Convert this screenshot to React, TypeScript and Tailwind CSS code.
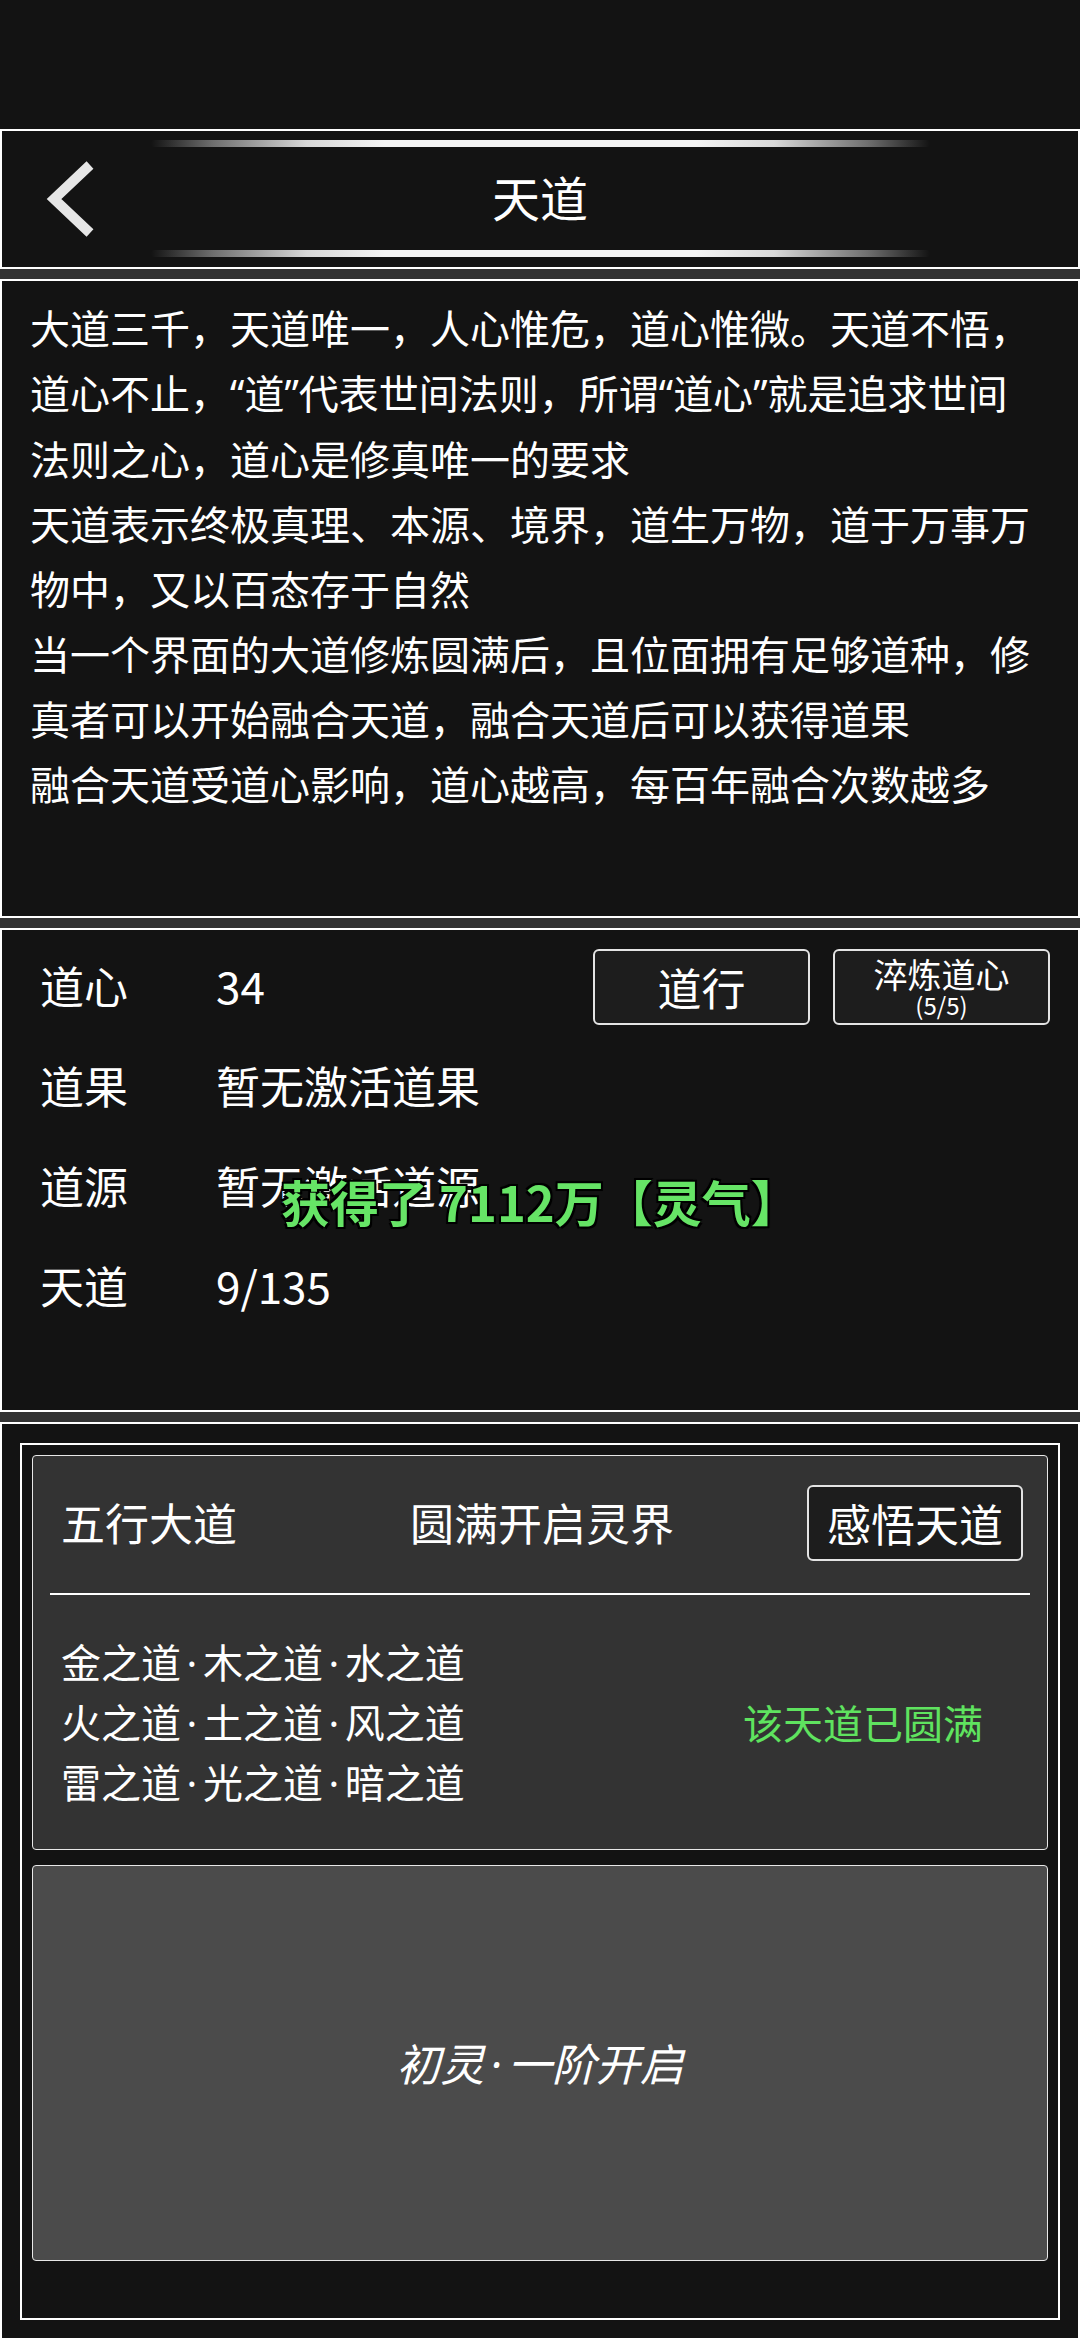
import React from 'react';

const introLines = [
    '大道三千，天道唯一，人心惟危，道心惟微。天道不悟，',
    '道心不止，“道”代表世间法则，所谓“道心”就是追求世间',
    '法则之心，道心是修真唯一的要求',
    '天道表示终极真理、本源、境界，道生万物，道于万事万',
    '物中，又以百态存于自然',
    '当一个界面的大道修炼圆满后，且位面拥有足够道种，修',
    '真者可以开始融合天道，融合天道后可以获得道果',
    '融合天道受道心影响，道心越高，每百年融合次数越多',
];

const stats = [
    { label: '道果', value: '暂无激活道果' },
    { label: '道源', value: '暂无激活道源' },
    { label: '天道', value: '9/135' },
];

const daoRows = ['金之道·木之道·水之道', '火之道·土之道·风之道', '雷之道·光之道·暗之道'];

// quotes and middle dots are narrow in the game font, so set them in a latin face
function Narrow({ text }: { text: string }) {
    const parts = text.split(/([“”·])/);
    return (
        <>
            {parts.map((p, i) => {
                if (p === '·') {
                    return (
                        <span key={i} className="px-[0.14em] font-['Noto_Sans',sans-serif]">
                            {p}
                        </span>
                    );
                }
                if (p === '“' || p === '”') {
                    return (
                        <span key={i} className="font-['Noto_Sans',sans-serif]">
                            {p}
                        </span>
                    );
                }
                return <React.Fragment key={i}>{p}</React.Fragment>;
            })}
        </>
    );
}

function GlowLine() {
    return (
        <div className="h-[7px] w-[779px] shrink-0 rounded-full bg-[linear-gradient(90deg,rgba(120,120,120,0)_0%,rgba(150,150,150,0.7)_8%,#d8d8d8_20%,#f4f4f4_30%,#f4f4f4_70%,#d8d8d8_80%,rgba(150,150,150,0.7)_92%,rgba(120,120,120,0)_100%)]" />
    );
}

export default function App() {
    return (
        <div className="flex h-[2340px] w-[1080px] flex-col overflow-hidden bg-[#333333] font-['Noto_Sans_CJK_SC','Noto_Sans',sans-serif] text-white">
            <div className="h-[129px] shrink-0 bg-[#131313]" />

            {/* header */}
            <header className="flex h-[140px] shrink-0 flex-col items-center border-2 border-white bg-[#131313]">
                <div className="mt-[9px]" />
                <GlowLine />
                <div className="grid w-full flex-1 grid-cols-[1fr_auto_1fr] items-center">
                    <div className="pl-[38px]">
                        <svg width="56" height="84" viewBox="0 0 56 84" fill="none">
                            <polyline
                                points="50,8 14,42 50,76"
                                stroke="#e6e6e6"
                                strokeWidth="10"
                                strokeLinecap="butt"
                                strokeLinejoin="miter"
                            />
                        </svg>
                    </div>
                    <h1 className="-mt-[6px] text-[48px] leading-none font-normal">天道</h1>
                    <div />
                </div>
                <GlowLine />
                <div className="mb-[10px]" />
            </header>

            {/* intro text */}
            <section className="mt-[10px] h-[639px] shrink-0 border-2 border-white bg-[#131313] px-[28px] pt-[14px] text-[40px] leading-[65px]">
                {introLines.map((line) => (
                    <div key={line} className="whitespace-nowrap">
                        <Narrow text={line} />
                    </div>
                ))}
            </section>

            {/* stats */}
            <section className="relative mt-[10px] h-[484px] shrink-0 border-2 border-white bg-[#131313] pt-[5px] text-[44px]">
                <div className="flex h-[100px] items-center pl-[38px] pr-[28px]">
                    <span className="w-[176px] leading-none">道心</span>
                    <span className="leading-none">34</span>
                    <div className="ml-auto mt-[3px] flex gap-[23px]">
                        <button className="flex h-[76px] w-[217px] items-center justify-center rounded-[6px] border-2 border-[#e4e4e4] bg-[#1d1d1d] text-[44px] leading-none text-white">
                            道行
                        </button>
                        <button className="flex h-[76px] w-[217px] flex-col items-center justify-center rounded-[6px] border-2 border-[#e4e4e4] bg-[#1d1d1d] text-white">
                            <span className="text-[34px] leading-[36px]">淬炼道心</span>
                            <span className="text-[24px] leading-[26px]">(5/5)</span>
                        </button>
                    </div>
                </div>
                {stats.map((s) => (
                    <div key={s.label} className="flex h-[100px] items-center pl-[38px] pr-[28px]">
                        <span className="w-[176px] leading-none">{s.label}</span>
                        <span className="leading-none">{s.value}</span>
                    </div>
                ))}

                {/* toast */}
                <div className="absolute left-[279px] top-[246px] whitespace-nowrap text-[49px] font-bold leading-none text-[#66e466] [text-shadow:2px_2px_0_#000,-2px_2px_0_#000,2px_-2px_0_#000,-2px_-2px_0_#000,0_0_3px_#000]">
                    获得了 7112万【灵气】
                </div>
            </section>

            {/* realm */}
            <section className="mt-[10px] flex-1 border-2 border-white bg-[#131313] px-[18px] pt-[19px]">
                <div className="border-2 border-white p-[10px] pb-[57px]">
                    <div className="h-[395px] rounded-[4px] border border-[#e8e8e8] bg-[#333333] pt-[29px]">
                        <div className="grid grid-cols-3 items-center pl-[28px] pr-[24px] text-[44px]">
                            <span className="-mt-[3px] leading-none">五行大道</span>
                            <span className="-mt-[3px] text-center leading-none">圆满开启灵界</span>
                            <button className="flex h-[76px] w-[216px] items-center justify-center justify-self-end rounded-[6px] border-2 border-[#e4e4e4] bg-[#1d1d1d] text-[44px] leading-none text-white">
                                感悟天道
                            </button>
                        </div>
                        <div className="mx-[17px] mt-[32px] h-[2px] bg-white" />
                        <div className="mt-[37px] flex items-center justify-between pl-[28px] pr-[64px] text-[40px]">
                            <div className="leading-[59px]">
                                {daoRows.map((r) => (
                                    <div key={r} className="whitespace-nowrap">
                                        <Narrow text={r} />
                                    </div>
                                ))}
                            </div>
                            <span className="leading-none text-[#5fe35f]">该天道已圆满</span>
                        </div>
                    </div>
                    <div className="mt-[15px] flex h-[396px] items-center justify-center rounded-[4px] border border-[#e8e8e8] bg-[#4b4b4b]">
                        <span className="text-[44px] italic leading-none">
                            <Narrow text="初灵·一阶开启" />
                        </span>
                    </div>
                </div>
            </section>
        </div>
    );
}
